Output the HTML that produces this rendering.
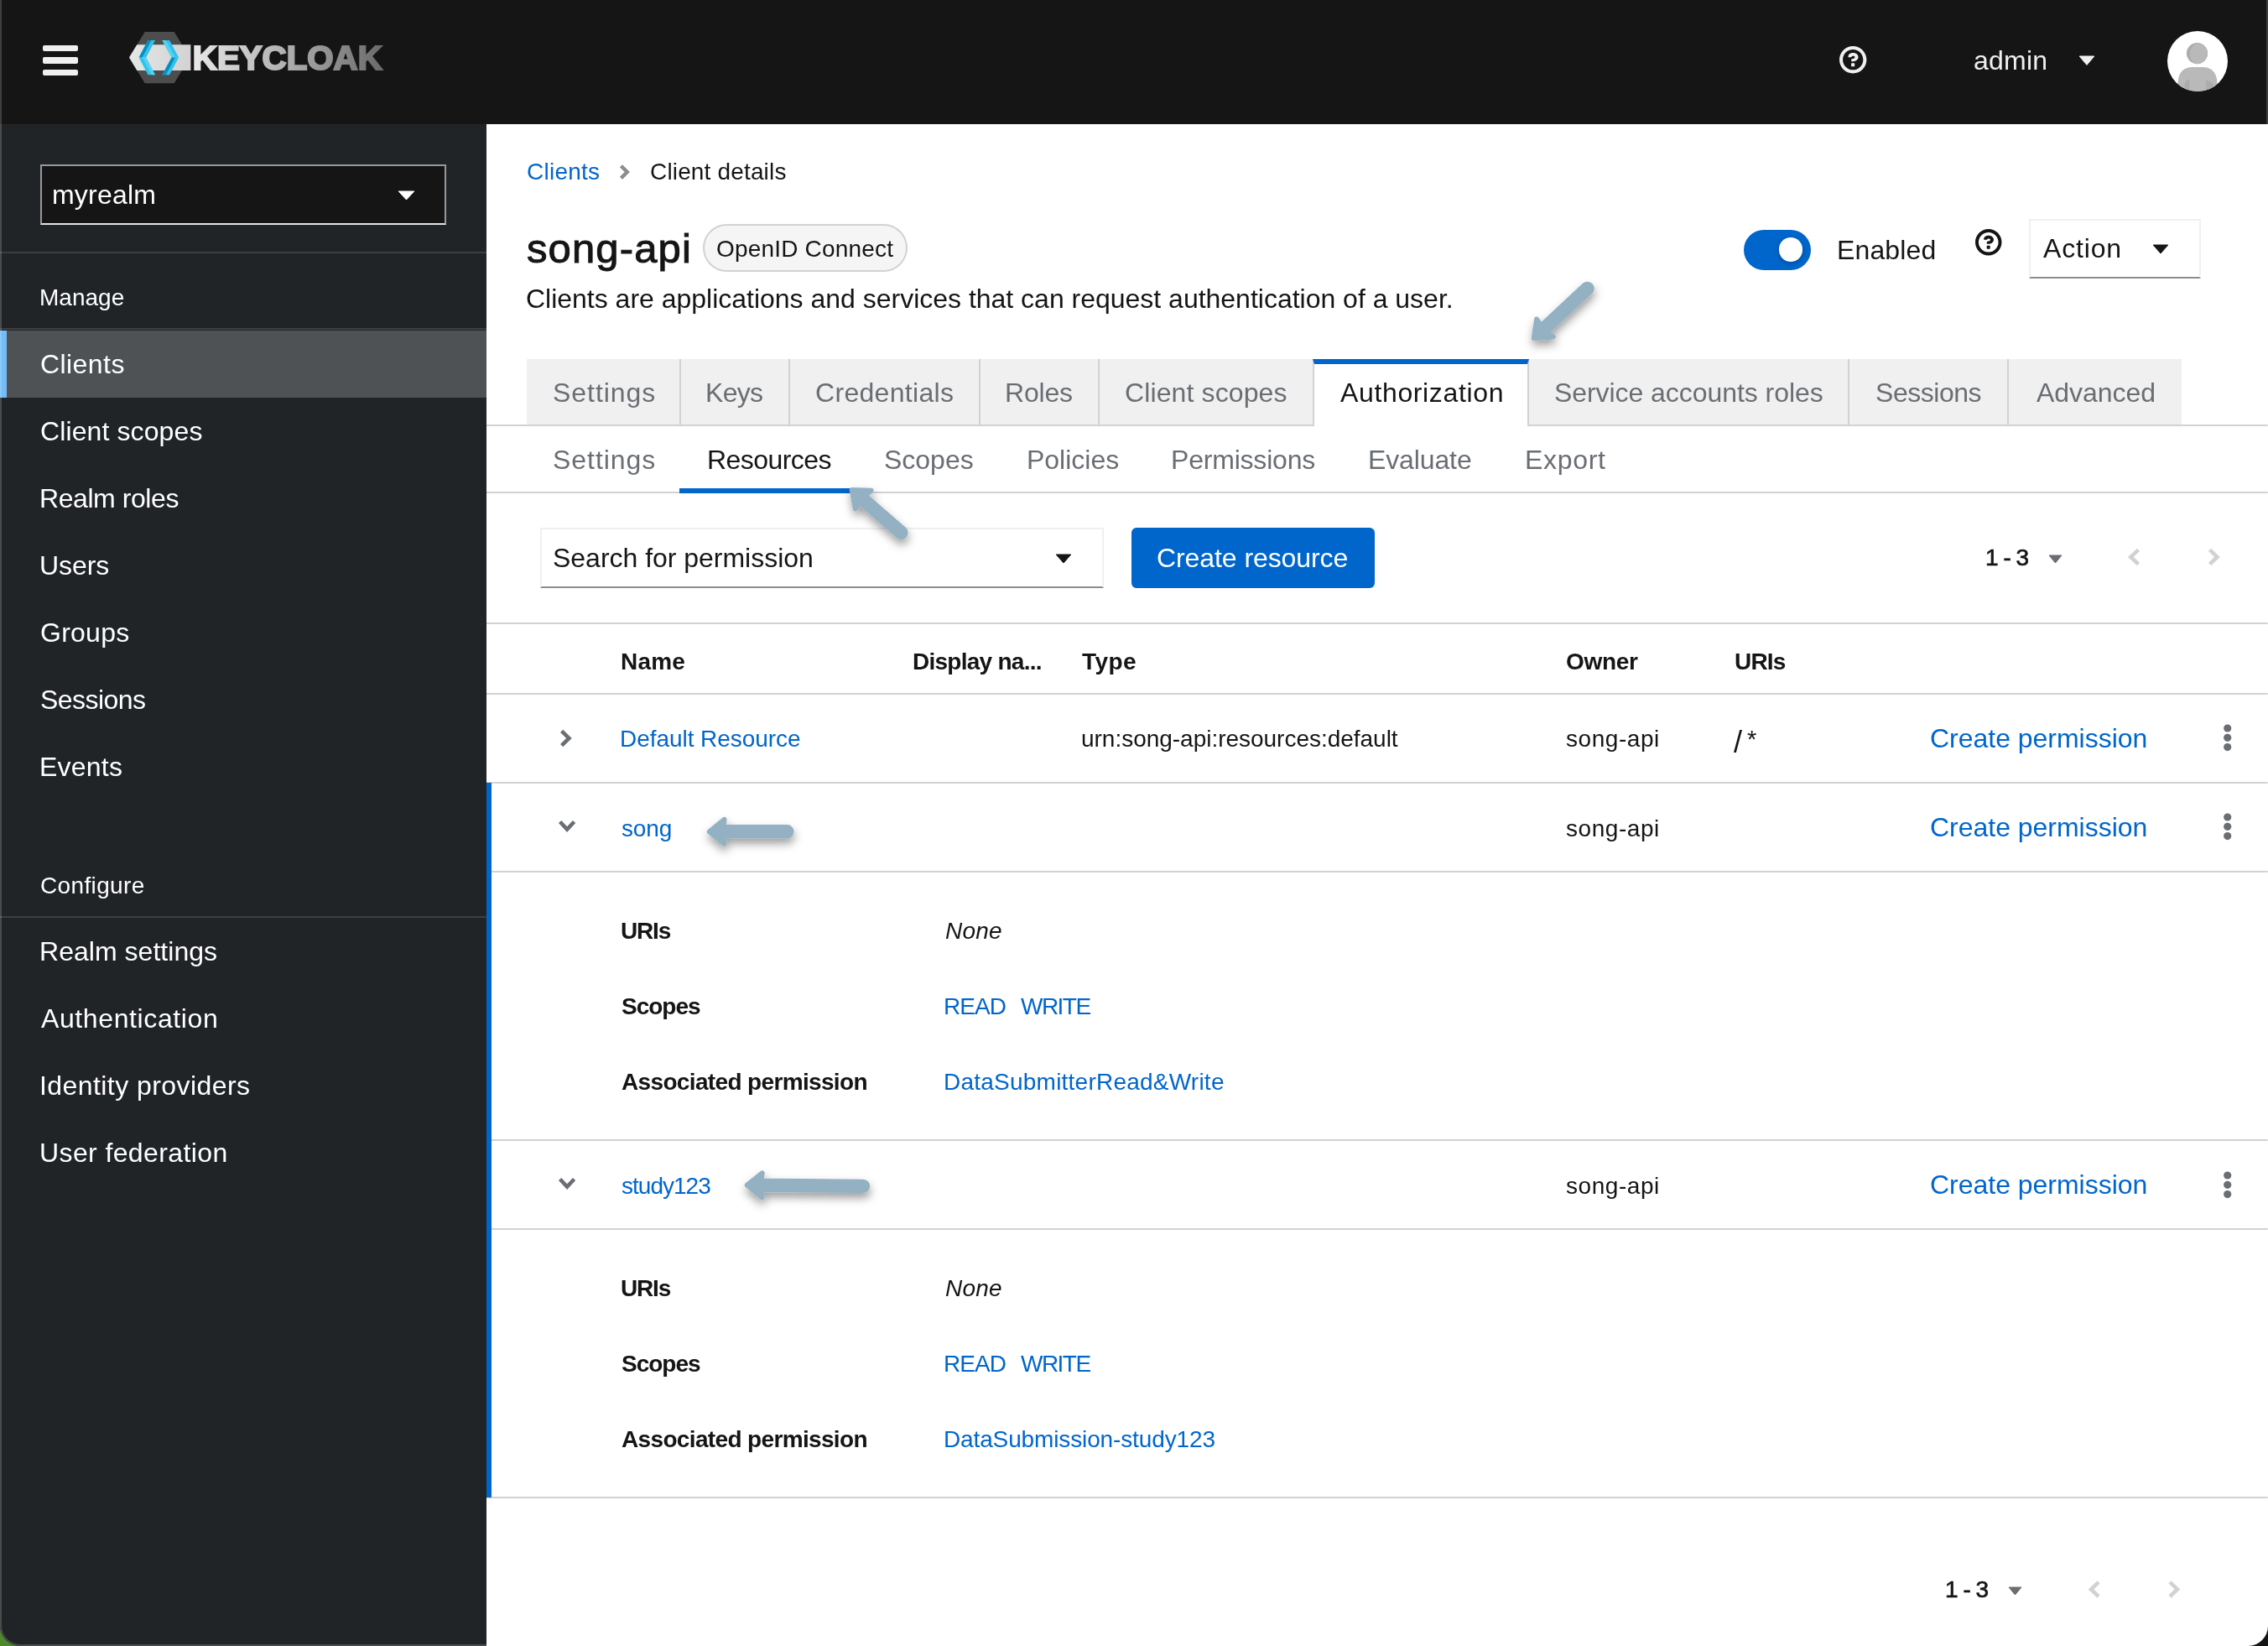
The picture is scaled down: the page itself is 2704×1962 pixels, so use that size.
<!DOCTYPE html>
<html lang="en">
<head>
<meta charset="utf-8">
<title>Keycloak Administration Console</title>
<style>
html,body{margin:0;padding:0;background:#151515;}
body{width:2704px;height:1962px;overflow:hidden;font-family:"Liberation Sans",sans-serif;}
#app{position:relative;width:2704px;height:1962px;overflow:hidden;}
#app *{box-sizing:border-box;}
.r{position:absolute;}
.t{will-change:transform;position:absolute;margin:0;padding:0;line-height:1;white-space:nowrap;font-weight:400;font-style:normal;text-decoration:none;border:0;display:block;}
svg{position:absolute;overflow:visible;}
</style>
</head>
<body>
<div id="app">
<header id="masthead">
<div class="r" style="left:0;top:0;width:2704px;height:148px;background:#151515"></div>
<div class="r" style="left:51px;top:53.5px;width:42px;height:7.4px;background:#f0f0f0;border-radius:2px"></div>
<div class="r" style="left:51px;top:68.3px;width:42px;height:7.4px;background:#f0f0f0;border-radius:2px"></div>
<div class="r" style="left:51px;top:83.1px;width:42px;height:7.4px;background:#f0f0f0;border-radius:2px"></div>
<svg id="logo" style="left:150px;top:30px;will-change:transform" width="320" height="80" viewBox="150 30 320 80">
  <defs>
    <linearGradient id="kcg" x1="230" y1="0" x2="458" y2="0" gradientUnits="userSpaceOnUse">
      <stop offset="0" stop-color="#e8e8e8"/><stop offset="0.45" stop-color="#b4b4b4"/><stop offset="1" stop-color="#696969"/>
    </linearGradient>
    <linearGradient id="kcb" x1="154" y1="0" x2="228" y2="0" gradientUnits="userSpaceOnUse">
      <stop offset="0" stop-color="#e6e6e6"/><stop offset="1" stop-color="#d2d2d2"/>
    </linearGradient>
  </defs>
  <polygon points="172.7,38 207.7,38 226.4,68.6 207.7,99.2 172.7,99.2 154,68.6" fill="#4d4d4d"/>
  <polygon points="163.3,53.3 227.4,53.3 227.4,83.9 163.3,83.9 154,68.6" fill="url(#kcb)"/>
  <polygon points="176.4,48 185,48 174.2,68.6 165.6,68.6" fill="#2ec3ee"/>
  <polygon points="176.4,48 180.4,48 169.6,68.6 165.6,68.6" fill="#0a8cbd"/>
  <polygon points="165.6,68.6 174.2,68.6 185,89.2 176.4,89.2" fill="#2ec3ee"/>
  <polygon points="169.9,68.6 174.2,68.6 185,89.2 180.7,89.2" fill="#55d2f3"/>
  <polygon points="193.4,48 202,48 213.2,68.6 204.6,68.6" fill="#2ec3ee"/>
  <polygon points="193.4,48 197.7,48 208.9,68.6 204.6,68.6" fill="#55d2f3"/>
  <polygon points="204.6,68.6 213.2,68.6 202,89.2 193.4,89.2" fill="#2ec3ee"/>
  <polygon points="204.6,68.6 208.9,68.6 197.7,89.2 193.4,89.2" fill="#0a8cbd"/>
  <text x="229.8" y="82.7" font-family="Liberation Sans, sans-serif" font-weight="700" font-size="39.8" textLength="226" lengthAdjust="spacingAndGlyphs" fill="url(#kcg)" stroke="url(#kcg)" stroke-width="2.2" stroke-linejoin="miter">KEYCLOAK</text>
</svg>
<svg style="left:2192.8px;top:54.5px" width="32.4" height="32.4" viewBox="0 0 1024 1024"><path fill="#f0f0f0" d="M521.3,576 C627.5,576 713.7,502 713.7,413.7 C713.7,325.4 627.6,253.6 521.3,253.6 C366,253.6 334.5,337.7 329.2,407.2 C329.2,414.3 335.2,416 343.5,416 L445,416 C450.5,416 458,415.5 460.8,406.5 C460.8,362.6 582.9,357.1 582.9,413.6 C582.9,441.9 556.2,470.9 521.3,473 C486.4,475.1 447.3,479.8 447.3,521.7 L447.3,553.8 C447.3,570.8 456.1,576 472,576 C487.9,576 521.3,576 521.3,576 M575.3,751.3 L575.3,655.3 C575.3,645.8 567.5,638 558,638 L462,638 C452.5,638 444.7,645.8 444.7,655.3 L444.7,751.3 C444.7,760.8 452.5,768.6 462,768.6 L558,768.6 C567.5,768.6 575.3,760.8 575.3,751.3 M512,896 C300.2,896 128,723.9 128,512 C128,300.3 300.2,128 512,128 C723.8,128 896,300.2 896,512 C896,723.8 723.7,896 512,896 M512.1,0 C229.7,0 0,229.8 0,512 C0,794.2 229.8,1024 512.1,1024 C794.4,1024 1024,794.3 1024,512 C1024,229.7 794.4,0 512.1,0"/></svg>
<svg style="left:2478px;top:66px" width="20" height="12" viewBox="0 0 20 12"><path d="M1.2,1 H18.8 L10,11.4 Z" fill="#f0f0f0" stroke="#f0f0f0" stroke-width="1" stroke-linejoin="round"/></svg>
<svg style="left:2584px;top:36.5px" width="72" height="72" viewBox="0 0 72 72">
  <defs><clipPath id="avc"><circle cx="36" cy="36" r="36"/></clipPath><clipPath id="avh"><circle cx="35.5" cy="26.6" r="12.6"/></clipPath></defs>
  <circle cx="36" cy="36" r="36" fill="#ffffff"/>
  <g clip-path="url(#avc)">
    <circle cx="35.5" cy="26.6" r="12.6" fill="#acacac"/>
    <circle cx="41" cy="27.5" r="14" fill="#b9b9b9" clip-path="url(#avh)"/>
    <path d="M12.6,80 V62 C12.6,50 19,43 30,43 H42 C53,43 59.4,50 59.4,62 V80 Z" fill="#b9b9b9"/>
    <path d="M20.5,80 V66 C20.5,61 23,58 26.5,57.5 V80 Z" fill="#acacac"/>
    <path d="M46,59 C51,59.5 54.5,62 55.5,67 L55,80 H47.5 Z" fill="#acacac"/>
  </g>
</svg>
<span class="t" style="left:2352.7px;top:55.9px;font-size:32px;color:#f0f0f0;letter-spacing:0.24px">admin</span>
</header>
<nav id="sidebar">
<div class="r" style="left:0;top:148px;width:580px;height:1814px;background:#212427"></div>
<div class="r" style="left:48px;top:196px;width:484px;height:72px;background:#151515;border:2px solid #96999d;border-bottom-color:#e4e4e4"></div>
<svg style="left:473.6px;top:226.5px" width="21" height="12" viewBox="0 0 21 12"><path d="M1.2,1 H19.8 L10.5,11 Z" fill="#ffffff" stroke="#ffffff" stroke-width="1" stroke-linejoin="round"/></svg>
<div class="r" style="left:0;top:300px;width:580px;height:2px;background:#3c3f42"></div>
<div class="r" style="left:0;top:391px;width:580px;height:2px;background:#3c3f42"></div>
<div class="r" style="left:0;top:394px;width:580px;height:80px;background:#4f5255"></div>
<div class="r" style="left:0;top:394px;width:8px;height:80px;background:#73bcf7"></div>
<div class="r" style="left:0;top:1092px;width:580px;height:2px;background:#3c3f42"></div>
<span class="t" style="left:62.4px;top:215.9px;font-size:32px;color:#ffffff;letter-spacing:0.21px">myrealm</span>
<h2 class="t" style="left:47.0px;top:341.4px;font-size:28px;color:#ffffff;letter-spacing:0.02px">Manage</h2>
<a class="t" href="#" style="left:47.6px;top:418.2px;font-size:32px;color:#ffffff;letter-spacing:0.43px">Clients</a>
<a class="t" href="#" style="left:47.6px;top:498.2px;font-size:32px;color:#ffffff;letter-spacing:0.11px">Client scopes</a>
<a class="t" href="#" style="left:46.6px;top:578.2px;font-size:32px;color:#ffffff;letter-spacing:-0.43px">Realm roles</a>
<a class="t" href="#" style="left:46.6px;top:658.2px;font-size:32px;color:#ffffff;letter-spacing:-0.09px">Users</a>
<a class="t" href="#" style="left:47.6px;top:738.2px;font-size:32px;color:#ffffff;letter-spacing:0.25px">Groups</a>
<a class="t" href="#" style="left:47.6px;top:818.2px;font-size:32px;color:#ffffff;letter-spacing:-0.56px">Sessions</a>
<a class="t" href="#" style="left:46.6px;top:898.2px;font-size:32px;color:#ffffff;letter-spacing:0.23px">Events</a>
<h2 class="t" style="left:47.6px;top:1041.6px;font-size:28px;color:#ffffff;letter-spacing:0.36px">Configure</h2>
<a class="t" href="#" style="left:46.6px;top:1118.2px;font-size:32px;color:#ffffff;letter-spacing:0.03px">Realm settings</a>
<a class="t" href="#" style="left:48.6px;top:1198.2px;font-size:32px;color:#ffffff;letter-spacing:0.61px">Authentication</a>
<a class="t" href="#" style="left:46.6px;top:1278.2px;font-size:32px;color:#ffffff;letter-spacing:0.43px">Identity providers</a>
<a class="t" href="#" style="left:46.6px;top:1358.2px;font-size:32px;color:#ffffff;letter-spacing:0.39px">User federation</a>
</nav>
<main id="main">
<div class="r" style="left:580px;top:148px;width:2124px;height:1814px;background:#ffffff"></div>
<!-- breadcrumb chevron -->
<svg style="left:738px;top:196px" width="14" height="20" viewBox="0 0 14 20"><path d="M2.46,1.76 L9.79,9.05 L2.46,16.34" fill="none" stroke="#8a8d90" stroke-width="4.4"/></svg>
<!-- label pill -->
<div class="r" style="left:838px;top:267px;width:244px;height:57px;background:#f5f5f5;border:2px solid #d2d2d2;border-radius:29px"></div>
<!-- toggle -->
<div class="r" style="left:2079px;top:274px;width:80px;height:48px;background:#0066cc;border-radius:24px"></div>
<div class="r" style="left:2120.7px;top:283.4px;width:28.6px;height:28.6px;background:#ffffff;border-radius:50%;box-shadow:0 2px 6px rgba(3,3,3,.25)"></div>
<svg style="left:2355.4px;top:273px" width="31.5" height="31.5" viewBox="0 0 1024 1024"><path fill="#151515" d="M521.3,576 C627.5,576 713.7,502 713.7,413.7 C713.7,325.4 627.6,253.6 521.3,253.6 C366,253.6 334.5,337.7 329.2,407.2 C329.2,414.3 335.2,416 343.5,416 L445,416 C450.5,416 458,415.5 460.8,406.5 C460.8,362.6 582.9,357.1 582.9,413.6 C582.9,441.9 556.2,470.9 521.3,473 C486.4,475.1 447.3,479.8 447.3,521.7 L447.3,553.8 C447.3,570.8 456.1,576 472,576 C487.9,576 521.3,576 521.3,576 M575.3,751.3 L575.3,655.3 C575.3,645.8 567.5,638 558,638 L462,638 C452.5,638 444.7,645.8 444.7,655.3 L444.7,751.3 C444.7,760.8 452.5,768.6 462,768.6 L558,768.6 C567.5,768.6 575.3,760.8 575.3,751.3 M512,896 C300.2,896 128,723.9 128,512 C128,300.3 300.2,128 512,128 C723.8,128 896,300.2 896,512 C896,723.8 723.7,896 512,896 M512.1,0 C229.7,0 0,229.8 0,512 C0,794.2 229.8,1024 512.1,1024 C794.4,1024 1024,794.3 1024,512 C1024,229.7 794.4,0 512.1,0"/></svg>
<!-- action dropdown -->
<div class="r" style="left:2419px;top:260.5px;width:205px;height:71px;background:#fff;border:2px solid #f0f0f0;border-bottom-color:#8a8d90"></div>
<svg style="left:2566px;top:290.5px" width="20" height="12" viewBox="0 0 20 12"><path d="M1.2,1 H18.8 L10,11 Z" fill="#151515" stroke="#151515" stroke-width="1" stroke-linejoin="round"/></svg>
<!-- primary tabs -->
<div class="r" style="left:628px;top:428px;width:1973px;height:78px;background:#f0f0f0"></div>
<div class="r" style="left:580px;top:505.5px;width:2124px;height:2px;background:#d2d2d2"></div>
<div class="r" style="left:810px;top:428px;width:2px;height:78px;background:#d2d2d2"></div>
<div class="r" style="left:940px;top:428px;width:2px;height:78px;background:#d2d2d2"></div>
<div class="r" style="left:1167px;top:428px;width:2px;height:78px;background:#d2d2d2"></div>
<div class="r" style="left:1309px;top:428px;width:2px;height:78px;background:#d2d2d2"></div>
<div class="r" style="left:2203px;top:428px;width:2px;height:78px;background:#d2d2d2"></div>
<div class="r" style="left:2393px;top:428px;width:2px;height:78px;background:#d2d2d2"></div>
<div class="r" style="left:1565px;top:428px;width:258px;height:80px;background:#fff;border-left:2px solid #d2d2d2;border-right:2px solid #d2d2d2;border-top:6px solid #0066cc"></div>
<!-- secondary tabs -->
<div class="r" style="left:580px;top:586px;width:2124px;height:2px;background:#d2d2d2"></div>
<div class="r" style="left:810px;top:582px;width:212px;height:6px;background:#0066cc"></div>
<!-- toolbar -->
<div class="r" style="left:644px;top:629px;width:672px;height:72px;background:#fff;border:2px solid #f0f0f0;border-bottom-color:#8a8d90"></div>
<svg style="left:1258px;top:659.5px" width="20" height="12" viewBox="0 0 20 12"><path d="M1.2,1 H18.8 L10,11 Z" fill="#151515" stroke="#151515" stroke-width="1" stroke-linejoin="round"/></svg>
<div class="r" style="left:1348.5px;top:629px;width:290.5px;height:72px;background:#0066cc;border-radius:6px"></div>
<svg style="left:2441.5px;top:660.5px" width="17" height="11" viewBox="0 0 17 11"><path d="M1,1 H16 L8.5,10 Z" fill="#6a6e73" stroke="#6a6e73" stroke-width="1" stroke-linejoin="round"/></svg>
<svg style="left:2536px;top:654px" width="17" height="22" viewBox="0 0 17 22"><path d="M13.47,1.43 L4.35,9.95 L13.47,18.47" fill="none" stroke="#d2d2d2" stroke-width="4.6"/></svg>
<svg style="left:2631px;top:654px" width="17" height="22" viewBox="0 0 17 22"><path d="M3.53,1.43 L12.45,9.95 L3.53,18.47" fill="none" stroke="#d2d2d2" stroke-width="4.6"/></svg>
<!-- table lines -->
<div class="r" style="left:580px;top:742px;width:2124px;height:2px;background:#d2d2d2"></div>
<div class="r" style="left:580px;top:826px;width:2124px;height:2px;background:#d2d2d2"></div>
<div class="r" style="left:580px;top:932px;width:2124px;height:2px;background:#d2d2d2"></div>
<div class="r" style="left:580px;top:1037.5px;width:2124px;height:2px;background:#d2d2d2"></div>
<div class="r" style="left:580px;top:1358px;width:2124px;height:2px;background:#d2d2d2"></div>
<div class="r" style="left:580px;top:1463.5px;width:2124px;height:2px;background:#d2d2d2"></div>
<div class="r" style="left:580px;top:1784px;width:2124px;height:2px;background:#d2d2d2"></div>
<div class="r" style="left:580px;top:933px;width:6px;height:852px;background:#0066cc"></div>
<!-- row toggles -->
<svg style="left:665px;top:869px" width="20" height="23" viewBox="0 0 20 23"><path d="M4.63,2.43 L13.45,11 L4.63,19.57" fill="none" stroke="#6a6e73" stroke-width="4.6"/></svg>
<svg style="left:664px;top:976px" width="24" height="18" viewBox="0 0 24 18"><path d="M3.63,3.53 L12.1,12.65 L20.57,3.53" fill="none" stroke="#6a6e73" stroke-width="4.6"/></svg>
<svg style="left:664px;top:1402.2px" width="24" height="18" viewBox="0 0 24 18"><path d="M3.63,3.53 L12.1,12.65 L20.57,3.53" fill="none" stroke="#6a6e73" stroke-width="4.6"/></svg>
<!-- kebabs -->
<svg style="left:2650px;top:863px" width="12" height="33" viewBox="0 0 12 33"><circle cx="5.7" cy="5" r="4.6" fill="#6a6e73"/><circle cx="5.7" cy="16.3" r="4.6" fill="#6a6e73"/><circle cx="5.7" cy="27.6" r="4.6" fill="#6a6e73"/></svg>
<svg style="left:2650px;top:969px" width="12" height="33" viewBox="0 0 12 33"><circle cx="5.7" cy="5" r="4.6" fill="#6a6e73"/><circle cx="5.7" cy="16.3" r="4.6" fill="#6a6e73"/><circle cx="5.7" cy="27.6" r="4.6" fill="#6a6e73"/></svg>
<svg style="left:2650px;top:1395.5px" width="12" height="33" viewBox="0 0 12 33"><circle cx="5.7" cy="5" r="4.6" fill="#6a6e73"/><circle cx="5.7" cy="16.3" r="4.6" fill="#6a6e73"/><circle cx="5.7" cy="27.6" r="4.6" fill="#6a6e73"/></svg>
<!-- bottom pagination -->
<svg style="left:2394px;top:1890.5px" width="17" height="11" viewBox="0 0 17 11"><path d="M1,1 H16 L8.5,10 Z" fill="#6a6e73" stroke="#6a6e73" stroke-width="1" stroke-linejoin="round"/></svg>
<svg style="left:2488.5px;top:1883.5px" width="17" height="22" viewBox="0 0 17 22"><path d="M13.07,1.93 L3.95,10.45 L13.07,18.97" fill="none" stroke="#d2d2d2" stroke-width="4.6"/></svg>
<svg style="left:2583.5px;top:1883.5px" width="17" height="22" viewBox="0 0 17 22"><path d="M3.03,1.93 L11.95,10.45 L3.03,18.97" fill="none" stroke="#d2d2d2" stroke-width="4.6"/></svg>
<a class="t" href="#" style="left:628.3px;top:191.3px;font-size:28px;color:#0066cc;letter-spacing:0.25px">Clients</a>
<span class="t" style="left:775.4px;top:191.3px;font-size:28px;color:#151515;letter-spacing:0.16px">Client details</span>
<h1 class="t" style="left:627.9px;top:271.5px;font-size:49px;color:#151515;letter-spacing:1.12px;-webkit-text-stroke:1.0px #151515">song-api</h1>
<span class="t" style="left:854.4px;top:283.0px;font-size:28px;color:#151515;letter-spacing:0.19px">OpenID Connect</span>
<p class="t" style="left:627.4px;top:339.9px;font-size:32px;color:#151515;letter-spacing:-0.01px">Clients are applications and services that can request authentication of a user.</p>
<span class="t" style="left:2190.0px;top:281.9px;font-size:32px;color:#151515;letter-spacing:0.13px">Enabled</span>
<span class="t" style="left:2435.7px;top:280.4px;font-size:32px;color:#151515;letter-spacing:0.83px">Action</span>
<a class="t" href="#" style="left:658.5px;top:451.6px;font-size:32px;color:#6a6e73;letter-spacing:0.95px">Settings</a>
<a class="t" href="#" style="left:841.0px;top:451.6px;font-size:32px;color:#6a6e73;letter-spacing:-0.71px">Keys</a>
<a class="t" href="#" style="left:972.0px;top:451.6px;font-size:32px;color:#6a6e73;letter-spacing:0.31px">Credentials</a>
<a class="t" href="#" style="left:1198.0px;top:451.6px;font-size:32px;color:#6a6e73;letter-spacing:-0.20px">Roles</a>
<a class="t" href="#" style="left:1341.0px;top:451.6px;font-size:32px;color:#6a6e73;letter-spacing:0.12px">Client scopes</a>
<a class="t" href="#" style="left:1597.5px;top:451.6px;font-size:32px;color:#151515;letter-spacing:0.64px">Authorization</a>
<a class="t" href="#" style="left:1853.3px;top:451.6px;font-size:32px;color:#6a6e73;letter-spacing:-0.06px">Service accounts roles</a>
<a class="t" href="#" style="left:2236.4px;top:451.6px;font-size:32px;color:#6a6e73;letter-spacing:-0.46px">Sessions</a>
<a class="t" href="#" style="left:2427.5px;top:451.6px;font-size:32px;color:#6a6e73;letter-spacing:-0.05px">Advanced</a>
<a class="t" href="#" style="left:658.5px;top:531.7px;font-size:32px;color:#6a6e73;letter-spacing:0.95px">Settings</a>
<a class="t" href="#" style="left:842.8px;top:531.7px;font-size:32px;color:#151515;letter-spacing:-0.56px">Resources</a>
<a class="t" href="#" style="left:1054.3px;top:531.7px;font-size:32px;color:#6a6e73;letter-spacing:-0.01px">Scopes</a>
<a class="t" href="#" style="left:1224.0px;top:531.7px;font-size:32px;color:#6a6e73;letter-spacing:-0.01px">Policies</a>
<a class="t" href="#" style="left:1396.2px;top:531.7px;font-size:32px;color:#6a6e73;letter-spacing:-0.20px">Permissions</a>
<a class="t" href="#" style="left:1631.0px;top:531.7px;font-size:32px;color:#6a6e73;letter-spacing:-0.12px">Evaluate</a>
<a class="t" href="#" style="left:1818.3px;top:531.7px;font-size:32px;color:#6a6e73;letter-spacing:0.70px">Export</a>
<span class="t" style="left:659.0px;top:648.9px;font-size:32px;color:#151515;letter-spacing:-0.02px">Search for permission</span>
<span class="t" style="left:1379.3px;top:648.9px;font-size:32px;color:#ffffff;letter-spacing:-0.08px">Create resource</span>
<b class="t" style="left:2366.7px;top:651.1px;font-size:28px;color:#151515;letter-spacing:-0.96px;-webkit-text-stroke:0.7px #151515">1 - 3</b>
<span class="t" style="left:740.0px;top:775.3px;font-size:28px;color:#151515;letter-spacing:0.17px;font-weight:700">Name</span>
<span class="t" style="left:1088.3px;top:775.3px;font-size:28px;color:#151515;letter-spacing:-0.74px;font-weight:700">Display na...</span>
<span class="t" style="left:1289.6px;top:775.3px;font-size:28px;color:#151515;letter-spacing:0.43px;font-weight:700">Type</span>
<span class="t" style="left:1867.3px;top:775.3px;font-size:28px;color:#151515;letter-spacing:-0.33px;font-weight:700">Owner</span>
<span class="t" style="left:2067.6px;top:775.3px;font-size:28px;color:#151515;letter-spacing:-0.84px;font-weight:700">URIs</span>
<a class="t" href="#" style="left:739.0px;top:867.1px;font-size:28px;color:#0066cc;letter-spacing:-0.05px">Default Resource</a>
<span class="t" style="left:1288.6px;top:867.1px;font-size:28px;color:#151515;letter-spacing:-0.02px">urn:song-api:resources:default</span>
<span class="t" style="left:1867.4px;top:867.1px;font-size:28px;color:#151515;letter-spacing:0.56px">song-api</span>
<span class="t" style="left:2067.2px;top:866.5px;font-size:36px;color:#151515;letter-spacing:2.80px">/</span>
<span class="t" style="left:2083.2px;top:867.0px;font-size:29px;color:#151515;letter-spacing:-1.20px">*</span>
<a class="t" href="#" style="left:2301.4px;top:863.7px;font-size:32px;color:#0066cc;letter-spacing:-0.02px">Create permission</a>
<a class="t" href="#" style="left:741.0px;top:973.5px;font-size:28px;color:#0066cc;letter-spacing:-0.15px">song</a>
<span class="t" style="left:1867.4px;top:973.5px;font-size:28px;color:#151515;letter-spacing:0.56px">song-api</span>
<a class="t" href="#" style="left:2301.4px;top:970.1px;font-size:32px;color:#0066cc;letter-spacing:-0.02px">Create permission</a>
<dt class="t" style="left:740.0px;top:1095.5px;font-size:28px;color:#151515;letter-spacing:-1.17px;font-weight:700">URIs</dt>
<dd class="t" style="left:1127.1px;top:1095.5px;font-size:28px;color:#151515;letter-spacing:0.18px;font-style:italic">None</dd>
<dt class="t" style="left:741.0px;top:1185.7px;font-size:28px;color:#151515;letter-spacing:-1.01px;font-weight:700">Scopes</dt>
<a class="t" href="#" style="left:1125.1px;top:1185.7px;font-size:28px;color:#0066cc;letter-spacing:-0.92px">READ</a>
<a class="t" href="#" style="left:1216.8px;top:1185.7px;font-size:28px;color:#0066cc;letter-spacing:-1.53px">WRITE</a>
<dt class="t" style="left:741.0px;top:1275.5px;font-size:28px;color:#151515;letter-spacing:-0.65px;font-weight:700">Associated permission</dt>
<a class="t" href="#" style="left:1125.1px;top:1275.5px;font-size:28px;color:#0066cc;letter-spacing:0.23px">DataSubmitterRead&amp;Write</a>
<a class="t" href="#" style="left:741.0px;top:1399.7px;font-size:28px;color:#0066cc;letter-spacing:-0.98px">study123</a>
<span class="t" style="left:1867.4px;top:1399.7px;font-size:28px;color:#151515;letter-spacing:0.56px">song-api</span>
<a class="t" href="#" style="left:2301.4px;top:1396.3px;font-size:32px;color:#0066cc;letter-spacing:-0.02px">Create permission</a>
<dt class="t" style="left:740.0px;top:1521.5px;font-size:28px;color:#151515;letter-spacing:-1.17px;font-weight:700">URIs</dt>
<dd class="t" style="left:1127.1px;top:1521.5px;font-size:28px;color:#151515;letter-spacing:0.18px;font-style:italic">None</dd>
<dt class="t" style="left:741.0px;top:1611.7px;font-size:28px;color:#151515;letter-spacing:-1.01px;font-weight:700">Scopes</dt>
<a class="t" href="#" style="left:1125.1px;top:1611.7px;font-size:28px;color:#0066cc;letter-spacing:-0.92px">READ</a>
<a class="t" href="#" style="left:1216.8px;top:1611.7px;font-size:28px;color:#0066cc;letter-spacing:-1.53px">WRITE</a>
<dt class="t" style="left:741.0px;top:1701.5px;font-size:28px;color:#151515;letter-spacing:-0.65px;font-weight:700">Associated permission</dt>
<a class="t" href="#" style="left:1125.1px;top:1701.5px;font-size:28px;color:#0066cc;letter-spacing:-0.13px">DataSubmission-study123</a>
<b class="t" style="left:2318.7px;top:1881.1px;font-size:28px;color:#151515;letter-spacing:-0.96px;-webkit-text-stroke:0.7px #151515">1 - 3</b>
<svg id="arrows" style="left:0;top:0" width="2704" height="1962" viewBox="0 0 2704 1962">
  <defs><filter id="ash" x="-30%" y="-30%" width="160%" height="200%"><feDropShadow dx="1" dy="6" stdDeviation="5.5" flood-color="#000" flood-opacity="0.38"/></filter></defs>
  <g fill="#93b1c3" stroke="#93b1c3" stroke-linejoin="round" stroke-linecap="round">
  <g filter="url(#ash)">
    <g transform="translate(1826.2,405.5) rotate(-42.9)"><path d="M3.6,0 L21.4,-14.4 L20,-5.2 L90.6,-5.2 A5.2,5.2 0 0 1 90.6,5.2 L20,5.2 L21.4,14.4 Z" stroke-width="6"/></g>
  </g>
  <g filter="url(#ash)">
    <g transform="translate(1013,581.6) rotate(40.9)"><path d="M3.6,0 L21.4,-14.4 L20,-5.2 L81.3,-5.2 A5.2,5.2 0 0 1 81.3,5.2 L20,5.2 L21.4,14.4 Z" stroke-width="6"/></g>
  </g>
  <g filter="url(#ash)">
    <g transform="translate(842.2,991.3) rotate(0)"><path d="M3.6,0 L21.4,-14.4 L20,-5.2 L96.2,-5.2 A5.2,5.2 0 0 1 96.2,5.2 L20,5.2 L21.4,14.4 Z" stroke-width="6"/></g>
  </g>
  <g filter="url(#ash)">
    <g transform="translate(887.2,1412.6) rotate(0.5)"><path d="M3.6,0 L21.4,-14.4 L20,-5.2 L141.7,-5.2 A5.2,5.2 0 0 1 141.7,5.2 L20,5.2 L21.4,14.4 Z" stroke-width="6"/></g>
  </g>
  </g>
</svg>
</main>
<div class="r" style="left:0;top:0;width:2px;height:1938px;background:rgba(255,255,255,.18)"></div>
<div class="r" style="left:2702px;top:0;width:2px;height:1938px;background:rgba(255,255,255,.18)"></div>
<div class="r" style="left:24px;top:1960px;width:2656px;height:2px;background:rgba(255,255,255,.18)"></div>
<svg id="corners" style="left:0;top:1938px" width="2704" height="24" viewBox="0 0 2704 24">
  <path d="M0,0 V24 H24 A24,24 0 0 1 0,0 Z" fill="#4f8a2a"/>
  <path d="M1,0 A23,23 0 0 0 24,23" fill="none" stroke="#494b4e" stroke-width="2"/>
  <path d="M2704,0 V24 H2680 A24,24 0 0 0 2704,0 Z" fill="#151515"/>
</svg>
</div>
</body>
</html>
